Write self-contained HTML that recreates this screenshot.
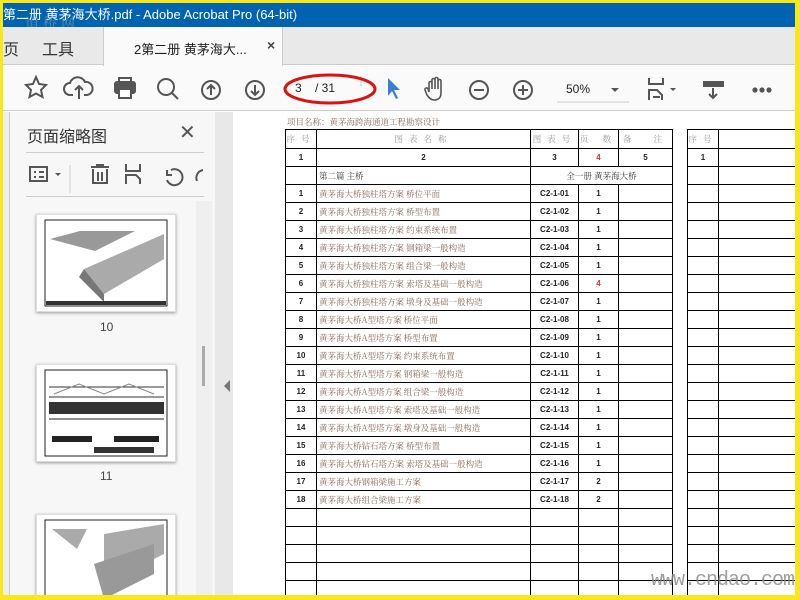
<!DOCTYPE html>
<html><head><meta charset="utf-8"><style>
*{margin:0;padding:0;box-sizing:border-box}
body{width:800px;height:600px;overflow:hidden;background:#f8e71c;position:relative;font-family:"Liberation Sans","Noto Sans CJK SC",sans-serif}
.a{position:absolute}
#win{left:3px;top:3px;width:792px;height:592px;background:#fff;overflow:hidden}
table{border-collapse:collapse;table-layout:fixed;position:absolute;font-family:"Noto Serif CJK SC","Liberation Serif",serif;font-size:8.5px}
td{border:1.6px solid #000;height:18px;text-align:center;color:#222;padding:0;white-space:nowrap;overflow:hidden}
td.n{text-align:left;padding-left:2px;color:#8c6a5c}
td.c{font-family:"Liberation Sans",sans-serif;font-weight:bold;font-size:8px}
.r{color:#d33}
.h td{color:#999;letter-spacing:6px}
svg{position:absolute}
</style></head><body>
<div id="win" class="a">
<div class="a" style="left:0;top:0;width:792px;height:24px;background:#0063b1;color:#fff;font-size:13px;line-height:24px;padding-left:0">第二册 黄茅海大桥.pdf - Adobe Acrobat Pro (64-bit)</div>
<div class="a" style="left:22px;top:10px;color:#8ab;font-size:14px;opacity:.6;letter-spacing:4px;font-family:'Noto Serif CJK SC',serif">道桥网</div>
<div class="a" style="left:0;top:24px;width:792px;height:38px;background:#e9e9e9;border-bottom:1px solid #ccc"></div>
<div class="a" style="left:0;top:33px;font-size:16px;color:#333">页</div>
<div class="a" style="left:39px;top:33px;font-size:16px;color:#333">工具</div>
<div class="a" style="left:100px;top:24px;width:180px;height:39px;background:#fafafa;border-left:1px solid #ccc;border-right:1px solid #ccc"></div>
<div class="a" style="left:131px;top:36px;font-size:13px;color:#222">2第二册 黄茅海大...</div>
<div class="a" style="left:264px;top:34px;font-size:14px;color:#444;font-weight:bold">×</div>
<div class="a" style="left:0;top:63px;width:792px;height:45px;background:#fafafa;border-bottom:1px solid #ccc"></div>
<svg width="792" height="45" style="left:0;top:63px" fill="none" stroke="#555" stroke-width="2">
<path d="M33 11l3 7 7 1-5 5 1.5 7-6.5-3.5-6.5 3.5 1.5-7-5-5 7-1z"/>
<path d="M70 29h-3a6 6 0 0 1 0-12 8 8 0 0 1 15-1 6 6 0 0 1 2 13h-3M76 33V20m-4 4 4-4 4 4"/>
<rect x="112" y="16" width="20" height="11" rx="2" fill="#555"/><rect x="116" y="12" width="12" height="4"/><rect x="116" y="23" width="12" height="9" fill="#fff"/>
<circle cx="163" cy="21" r="8"/><path d="M169 27l6 6"/>
<circle cx="208" cy="24" r="9"/><path d="M208 29V19m-4 4 4-4 4 4"/>
<circle cx="252" cy="24" r="9"/><path d="M252 19v10m-4-4 4 4 4-4"/>
<path d="M358 20V10" stroke="#ccc" stroke-width="1"/>
<path d="M385 12v18l4-5 4 8 2-1-4-8h6z" fill="#3a7fd5" stroke="none"/>
<path d="M426 26v-9a1.5 1.5 0 0 1 3 0v6-9a1.5 1.5 0 0 1 3 0v9-10a1.5 1.5 0 0 1 3 0v10-8a1.5 1.5 0 0 1 3 0v12c0 5-3 7-7 7-3 0-5-2-7-5l-2-5a1.5 1.5 0 0 1 3-1z" stroke-width="1.6"/>
<circle cx="476" cy="24" r="9"/><path d="M471 24h10"/>
<circle cx="520" cy="24" r="9"/><path d="M515 24h10m-5-5v10"/>
<path d="M554 36h72" stroke="#ccc" stroke-width="1"/>
<path d="M608 22l4 4 4-4z" fill="#555" stroke="none"/>
<path d="M646 12v6h14v-6M646 34v-10h8l5 5v5" /><path d="M667 22l3 3 3-3z" fill="#555" stroke="none"/><path d="M650 31h7"/>
<rect x="700" y="15" width="21" height="6" fill="#555" stroke="none"/><path d="M710 22v10m-4-4 4 4 4-4"/>
<circle cx="752" cy="24" r="1.6" fill="#555"/><circle cx="759" cy="24" r="1.6" fill="#555"/><circle cx="766" cy="24" r="1.6" fill="#555"/>
</svg>
<div class="a" style="left:292px;top:78px;font-size:12px;color:#222">3 &nbsp;&nbsp;&nbsp;/ 31</div>
<div class="a" style="left:563px;top:79px;font-size:12px;color:#222">50%</div>
<svg width="110" height="40" style="left:280px;top:65px"><ellipse cx="47" cy="21" rx="45" ry="14" fill="none" stroke="#d11" stroke-width="3"/></svg>
<div class="a" style="left:0;top:109px;width:7px;height:483px;background:#eee;border-right:1px solid #ccc"></div>
<div class="a" style="left:7px;top:109px;width:205px;height:483px;background:#f7f7f7"></div>
<div class="a" style="left:212px;top:109px;width:18px;height:483px;background:#e8e8e8"></div>
<div class="a" style="left:221px;top:377px;width:0;height:0;border-top:6px solid transparent;border-bottom:6px solid transparent;border-right:6px solid #777"></div>
<div class="a" style="left:24px;top:120px;font-size:16px;color:#333">页面缩略图</div>
<div class="a" style="left:176px;top:117px;font-size:20px;color:#555">✕</div>
<div class="a" style="left:23px;top:149px;width:178px;height:1px;background:#ccc"></div>
<div class="a" style="left:23px;top:193px;width:178px;height:1px;background:#ccc"></div>
<svg width="200" height="40" style="left:20px;top:152px" fill="none" stroke="#555" stroke-width="2">
<rect x="7" y="12" width="17" height="14"/><path d="M11 17h2m3 0h5m-10 5h2m3 0h5"/><path d="M32 18l3 3 3-3z" fill="#555" stroke="none"/>
<path d="M47 10v28" stroke="#ccc" stroke-width="1"/>
<path d="M68 12h18m-13-2h8m-11 4v14h14V14m-9 3v9m4-9v9"/>
<path d="M103 9v7h14V9m-14 20v-9h10l4 4v5"/>
<path d="M148 15a8 8 0 1 1-4 10m0-10v5h5"/>
<path d="M180 15a8 8 0 0 0-6 11"/>
</svg>
<div class="a" style="left:193px;top:198px;width:16px;height:394px;background:#efefef"></div>
<div class="a" style="left:199px;top:343px;width:3px;height:40px;background:#aaa"></div>
<div class="a" style="left:33px;top:211px;width:140px;height:98px;background:#fff;box-shadow:0 1px 3px #999;border:1px solid #ddd"></div>
<svg width="124" height="88" style="left:41px;top:216px"><rect x="1" y="1" width="122" height="86" fill="none" stroke="#222"/><path d="M6 20l30-8h55l-40 20z" fill="#999"/><path d="M40 50l80-35v25l-60 35z" fill="#aaa"/><path d="M40 50l20 25v8l-25-25z" fill="#777"/><rect x="2" y="82" width="120" height="4" fill="#333"/></svg>
<div class="a" style="left:97px;top:317px;font-size:12px;color:#444">10</div>
<div class="a" style="left:33px;top:361px;width:140px;height:98px;background:#fff;box-shadow:0 1px 3px #999;border:1px solid #ddd"></div>
<svg width="124" height="88" style="left:41px;top:366px"><rect x="1" y="1" width="122" height="86" fill="none" stroke="#222"/><path d="M5 18h115M5 28h115" stroke="#333"/><path d="M10 25l25-10 25 10 25-10 25 10" stroke="#888" fill="none"/><rect x="5" y="33" width="115" height="12" fill="#333"/><path d="M5 50h115" stroke="#222"/><path d="M8 70h40M70 70h45" stroke="#222" stroke-width="6"/><rect x="50" y="78" width="60" height="6" fill="#333"/></svg>
<div class="a" style="left:97px;top:466px;font-size:12px;color:#444">11</div>
<div class="a" style="left:33px;top:511px;width:140px;height:90px;background:#fff;box-shadow:0 1px 3px #999;border:1px solid #ddd"></div>
<svg width="124" height="80" style="left:41px;top:516px"><rect x="1" y="1" width="122" height="84" fill="none" stroke="#222"/><path d="M8 10h35l-10 20zM60 15l60-10v30l-60 30z" fill="#aaa"/><path d="M50 45l60-20v30l-50 25z" fill="#999"/></svg>
<div class="a" style="left:284px;top:113px;font-size:8.5px;color:#8c6a5c;font-family:'Noto Serif CJK SC',serif">项目名称：黄茅海跨海通道工程勘察设计</div>
<table style="left:282px;top:126px;width:387px">
<colgroup><col style="width:31px"><col style="width:214px"><col style="width:48px"><col style="width:40px"><col style="width:54px"></colgroup>
<tr class="h" style="height:19px"><td>序号</td><td>图表名称</td><td>图表号</td><td>页 数</td><td>备 &nbsp;注</td></tr>
<tr><td class="c">1</td><td class="c">2</td><td class="c">3</td><td class="c r">4</td><td class="c">5</td></tr>
<tr><td></td><td class="n" style="color:#333">第二篇 主桥</td><td colspan="3" style="color:#333">全一册 黄茅海大桥</td></tr>
<tr><td class="c">1</td><td class="n">黄茅海大桥独柱塔方案 桥位平面</td><td class="c">C2-1-01</td><td class="c">1</td><td></td></tr>
<tr><td class="c">2</td><td class="n">黄茅海大桥独柱塔方案 桥型布置</td><td class="c">C2-1-02</td><td class="c">1</td><td></td></tr>
<tr><td class="c">3</td><td class="n">黄茅海大桥独柱塔方案 约束系统布置</td><td class="c">C2-1-03</td><td class="c">1</td><td></td></tr>
<tr><td class="c">4</td><td class="n">黄茅海大桥独柱塔方案 钢箱梁一般构造</td><td class="c">C2-1-04</td><td class="c">1</td><td></td></tr>
<tr><td class="c">5</td><td class="n">黄茅海大桥独柱塔方案 组合梁一般构造</td><td class="c">C2-1-05</td><td class="c">1</td><td></td></tr>
<tr><td class="c">6</td><td class="n">黄茅海大桥独柱塔方案 索塔及基础一般构造</td><td class="c">C2-1-06</td><td class="c r">4</td><td></td></tr>
<tr><td class="c">7</td><td class="n">黄茅海大桥独柱塔方案 墩身及基础一般构造</td><td class="c">C2-1-07</td><td class="c">1</td><td></td></tr>
<tr><td class="c">8</td><td class="n">黄茅海大桥A型塔方案 桥位平面</td><td class="c">C2-1-08</td><td class="c">1</td><td></td></tr>
<tr><td class="c">9</td><td class="n">黄茅海大桥A型塔方案 桥型布置</td><td class="c">C2-1-09</td><td class="c">1</td><td></td></tr>
<tr><td class="c">10</td><td class="n">黄茅海大桥A型塔方案 约束系统布置</td><td class="c">C2-1-10</td><td class="c">1</td><td></td></tr>
<tr><td class="c">11</td><td class="n">黄茅海大桥A型塔方案 钢箱梁一般构造</td><td class="c">C2-1-11</td><td class="c">1</td><td></td></tr>
<tr><td class="c">12</td><td class="n">黄茅海大桥A型塔方案 组合梁一般构造</td><td class="c">C2-1-12</td><td class="c">1</td><td></td></tr>
<tr><td class="c">13</td><td class="n">黄茅海大桥A型塔方案 索塔及基础一般构造</td><td class="c">C2-1-13</td><td class="c">1</td><td></td></tr>
<tr><td class="c">14</td><td class="n">黄茅海大桥A型塔方案 墩身及基础一般构造</td><td class="c">C2-1-14</td><td class="c">1</td><td></td></tr>
<tr><td class="c">15</td><td class="n">黄茅海大桥钻石塔方案 桥型布置</td><td class="c">C2-1-15</td><td class="c">1</td><td></td></tr>
<tr><td class="c">16</td><td class="n">黄茅海大桥钻石塔方案 索塔及基础一般构造</td><td class="c">C2-1-16</td><td class="c">1</td><td></td></tr>
<tr><td class="c">17</td><td class="n">黄茅海大桥钢箱梁施工方案</td><td class="c">C2-1-17</td><td class="c">2</td><td></td></tr>
<tr><td class="c">18</td><td class="n">黄茅海大桥组合梁施工方案</td><td class="c">C2-1-18</td><td class="c">2</td><td></td></tr>
<tr><td></td><td></td><td></td><td></td><td></td></tr>
<tr><td></td><td></td><td></td><td></td><td></td></tr>
<tr><td></td><td></td><td></td><td></td><td></td></tr>
<tr><td></td><td></td><td></td><td></td><td></td></tr>
<tr><td></td><td></td><td></td><td></td><td></td></tr>
</table>
<table style="left:684px;top:126px;width:140px">
<colgroup><col style="width:31px"><col style="width:109px"></colgroup>
<tr class="h" style="height:19px"><td>序号</td><td></td></tr>
<tr><td class="c">1</td><td></td></tr>
<tr><td></td><td></td></tr><tr><td></td><td></td></tr><tr><td></td><td></td></tr><tr><td></td><td></td></tr><tr><td></td><td></td></tr><tr><td></td><td></td></tr><tr><td></td><td></td></tr><tr><td></td><td></td></tr><tr><td></td><td></td></tr><tr><td></td><td></td></tr><tr><td></td><td></td></tr><tr><td></td><td></td></tr><tr><td></td><td></td></tr><tr><td></td><td></td></tr><tr><td></td><td></td></tr><tr><td></td><td></td></tr><tr><td></td><td></td></tr><tr><td></td><td></td></tr><tr><td></td><td></td></tr><tr><td></td><td></td></tr><tr><td></td><td></td></tr><tr><td></td><td></td></tr><tr><td></td><td></td></tr><tr><td></td><td></td></tr>
</table>
<div class="a" style="left:648px;top:566px;font-size:20px;color:#888;opacity:.8;font-family:'Liberation Mono',monospace;letter-spacing:-1px">www.cndao.com</div>
</div>
</body></html>
